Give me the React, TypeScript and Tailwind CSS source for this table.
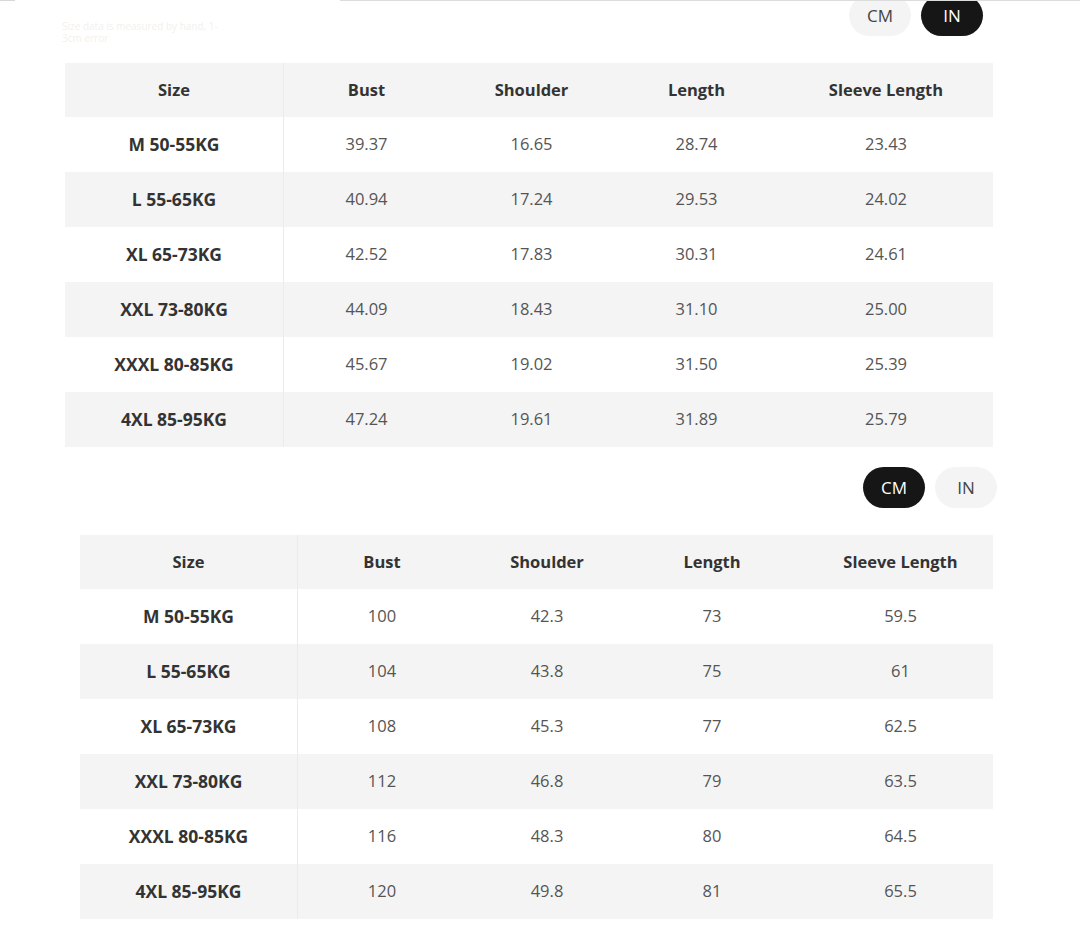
import React from 'react';

type Row = { size: string; vals: string[] };

const headers = ['Size', 'Bust', 'Shoulder', 'Length', 'Sleeve Length'];

const inRows: Row[] = [
  { size: 'M 50-55KG', vals: ['39.37', '16.65', '28.74', '23.43'] },
  { size: 'L 55-65KG', vals: ['40.94', '17.24', '29.53', '24.02'] },
  { size: 'XL 65-73KG', vals: ['42.52', '17.83', '30.31', '24.61'] },
  { size: 'XXL 73-80KG', vals: ['44.09', '18.43', '31.10', '25.00'] },
  { size: 'XXXL 80-85KG', vals: ['45.67', '19.02', '31.50', '25.39'] },
  { size: '4XL 85-95KG', vals: ['47.24', '19.61', '31.89', '25.79'] },
];

const cmRows: Row[] = [
  { size: 'M 50-55KG', vals: ['100', '42.3', '73', '59.5'] },
  { size: 'L 55-65KG', vals: ['104', '43.8', '75', '61'] },
  { size: 'XL 65-73KG', vals: ['108', '45.3', '77', '62.5'] },
  { size: 'XXL 73-80KG', vals: ['112', '46.8', '79', '63.5'] },
  { size: 'XXXL 80-85KG', vals: ['116', '48.3', '80', '64.5'] },
  { size: '4XL 85-95KG', vals: ['120', '49.8', '81', '65.5'] },
];

function UnitToggle({ active }: { active: 'cm' | 'in' }) {
  const on = 'bg-[#161616] text-white';
  const off = 'bg-[#f4f4f4] text-[#444]';
  return (
    <div className="flex gap-[10px]">
      <span className={`w-[62px] h-[41px] rounded-full flex items-center justify-center text-[17px] ${active === 'cm' ? on : off}`}>
        CM
      </span>
      <span className={`w-[62px] h-[41px] rounded-full flex items-center justify-center text-[17px] ${active === 'in' ? on : off}`}>
        IN
      </span>
    </div>
  );
}

function SizeTable({ rows, wide }: { rows: Row[]; wide: boolean }) {
  const cols = wide
    ? 'grid-cols-[219px_165px_165px_165px_214px]'
    : 'grid-cols-[218px_168px_162px_168px_197px]';
  return (
    <div className={wide ? 'w-[928px]' : 'w-[913px]'}>
      <div className={`grid ${cols} h-[54px] bg-[#f4f4f4] items-center text-[#333] text-[16.5px] font-bold`}>
        {headers.map((h, i) => (
          <div
            key={h}
            className={`h-full flex items-center justify-center ${i === 0 ? 'border-r border-[#ebebeb]' : ''} ${!wide && i === 4 ? 'pl-[12px]' : ''}`}
          >
            {h}
          </div>
        ))}
      </div>
      {rows.map((r, idx) => (
        <div
          key={r.size}
          className={`grid ${cols} h-[55px] items-center ${idx % 2 === 1 ? 'bg-[#f4f4f4]' : 'bg-white'}`}
        >
          <div className="h-full flex items-center justify-center font-bold text-[17.5px] text-[#333] border-r border-[#ebebeb]">
            {r.size}
          </div>
          {r.vals.map((v, i) => (
            <div
              key={i}
              className={`h-full flex items-center justify-center text-[16.5px] text-[#555] ${!wide && i === 3 ? 'pl-[12px]' : ''}`}
            >
              {v}
            </div>
          ))}
        </div>
      ))}
    </div>
  );
}

export default function App() {
  return (
    <div className="w-[1080px] h-[935px] bg-white relative overflow-hidden text-[16px] font-['Open_Sans',sans-serif]">
      {/* thin top rules */}
      <div className="absolute top-0 left-0 w-[15px] h-px bg-[#d8d8d8]" />
      <div className="absolute top-0 left-[340px] right-0 h-px bg-[#dcdcdc]" />

      <div className="flex flex-col">
        <div className="flex items-start justify-between h-[68px] -mt-[5px] pl-[62px] pr-[97px]">
          <span className="text-[10px] leading-[12px] text-[#f3f1ec] mt-[25px] w-[175px]">
            Size data is measured by hand, 1-3cm error
          </span>
          <UnitToggle active="in" />
        </div>
        <div className="ml-[65px]">
          <SizeTable rows={inRows} wide />
        </div>
        <div className="flex justify-end pr-[83px] mt-[20px]">
          <UnitToggle active="cm" />
        </div>
        <div className="ml-[80px] mt-[27px]">
          <SizeTable rows={cmRows} wide={false} />
        </div>
      </div>
    </div>
  );
}
